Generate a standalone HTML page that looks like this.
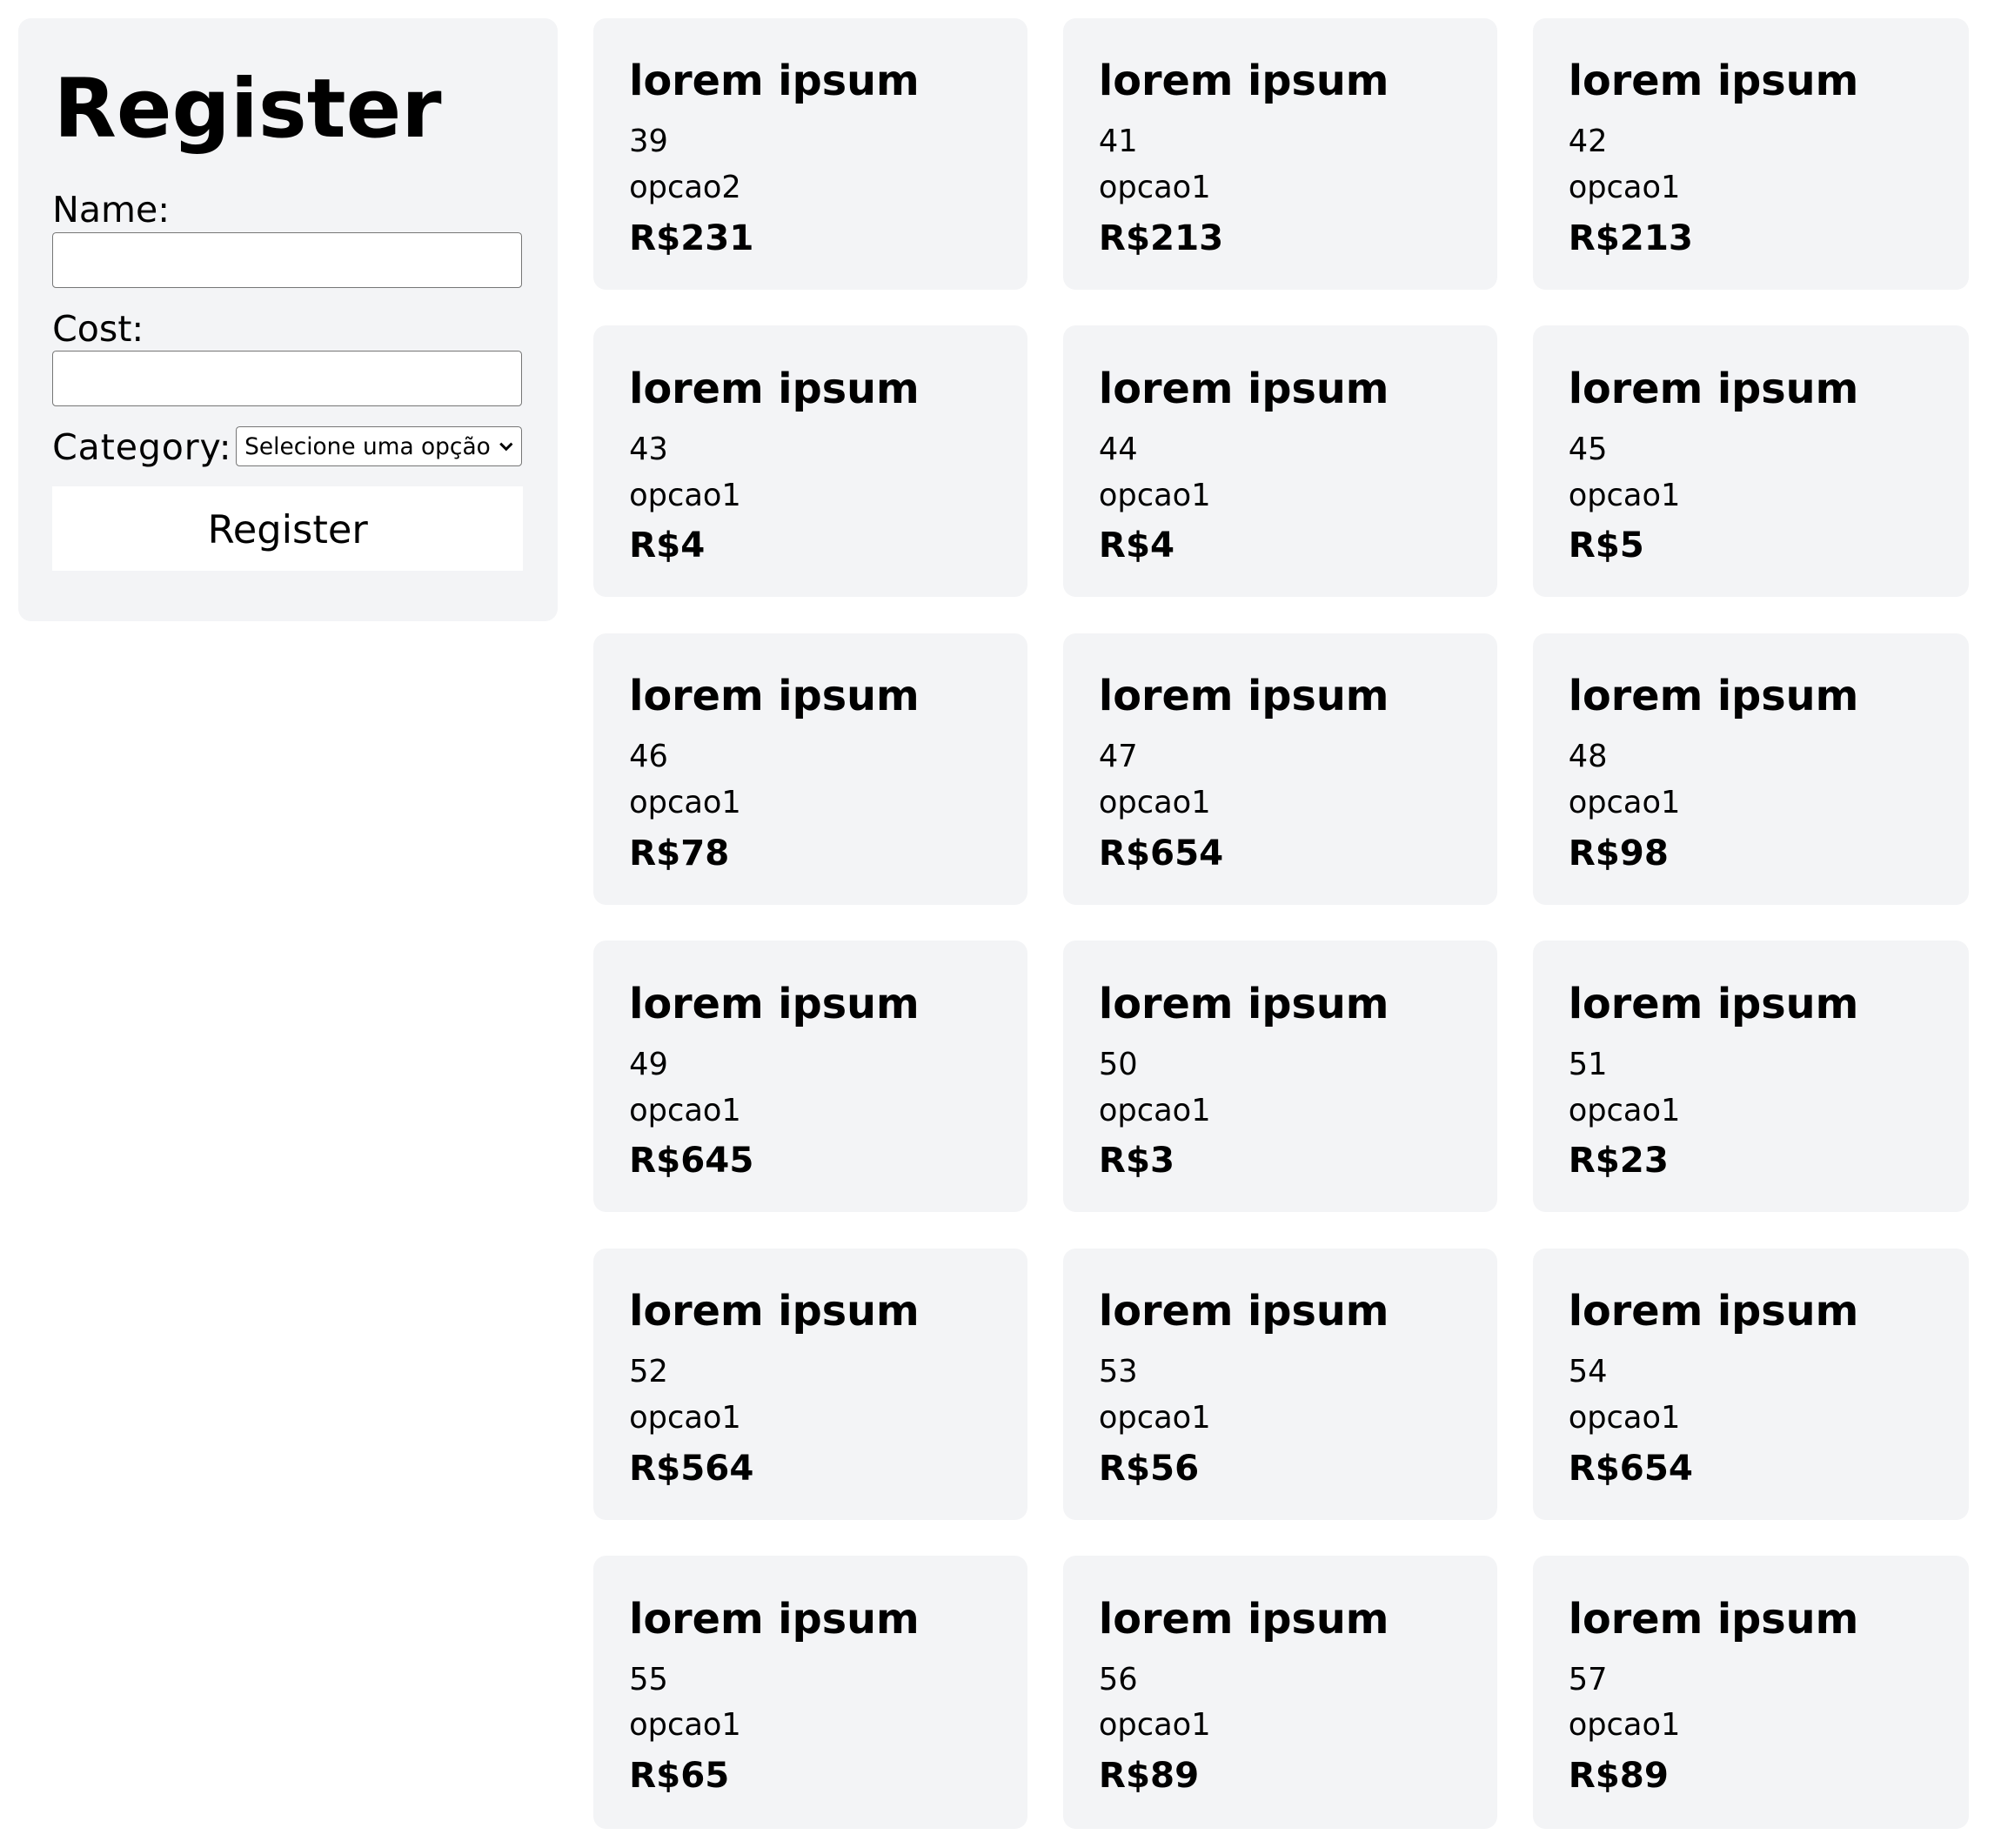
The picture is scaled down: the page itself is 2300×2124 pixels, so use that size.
<!DOCTYPE html>
<html><head><meta charset="utf-8"><style>
html,body{margin:0;padding:0;background:#fff;}
body{width:2300px;height:2124px;overflow:hidden;}
#w{zoom:1.4668;position:relative;width:1568px;height:1448px;font-family:"DejaVu Sans","Liberation Sans",sans-serif;color:#000;}
.p{position:absolute;left:14px;top:14px;width:423px;height:473px;background:#f3f4f6;border-radius:10px;}
.t{position:absolute;line-height:1;white-space:nowrap;}
.inp{position:absolute;left:41px;width:367px;background:#fff;border:1px solid #767676;border-radius:3px;}
.c{position:absolute;width:340px;height:213px;background:#f3f4f6;border-radius:10px;}
.c .h{position:absolute;left:28px;top:34px;font-size:32.5px;font-weight:bold;line-height:1;}
.c .n{position:absolute;left:28px;top:85px;font-size:24px;line-height:1;}
.c .o{position:absolute;left:28px;top:121px;font-size:24px;line-height:1;}
.c .r{position:absolute;left:28px;top:159px;font-size:27.5px;font-weight:bold;line-height:1;}
</style></head><body><div id="w">
<div class="p"></div>
<div class="t" style="left:42px;top:54px;font-size:64px;font-weight:bold;">Register</div>
<div class="t" style="left:41px;top:151px;font-size:28px;">Name:</div>
<div class="inp" style="top:182px;height:42px;"></div>
<div class="t" style="left:41px;top:244px;font-size:28px;">Cost:</div>
<div class="inp" style="top:275px;height:42px;"></div>
<div class="t" style="left:41px;top:337px;font-size:28px;letter-spacing:0.6px;">Category:</div>
<div style="position:absolute;left:185px;top:334px;width:223px;height:30px;background:#fff;border:1px solid #767676;border-radius:3px;">
<span class="t" style="left:6px;top:7px;font-size:18px;">Selecione uma opção</span>
<svg style="position:absolute;right:6px;top:10px" width="12" height="10" viewBox="0 0 12 10"><path d="M1.5 2.5 L6 7 L10.5 2.5" fill="none" stroke="#000" stroke-width="2"/></svg>
</div>
<div style="position:absolute;left:41px;top:381px;width:369px;height:66px;background:#fff;"></div>
<div class="t" style="left:41px;width:369px;text-align:center;top:400px;font-size:30.5px;">Register</div>

<div class="c" style="left:465px;top:14px"><div class="h">lorem ipsum</div><div class="n">39</div><div class="o">opcao2</div><div class="r">R$231</div></div>
<div class="c" style="left:833px;top:14px"><div class="h">lorem ipsum</div><div class="n">41</div><div class="o">opcao1</div><div class="r">R$213</div></div>
<div class="c" style="left:1201px;top:14px;width:342px"><div class="h">lorem ipsum</div><div class="n">42</div><div class="o">opcao1</div><div class="r">R$213</div></div>

<div class="c" style="left:465px;top:255px"><div class="h">lorem ipsum</div><div class="n">43</div><div class="o">opcao1</div><div class="r">R$4</div></div>
<div class="c" style="left:833px;top:255px"><div class="h">lorem ipsum</div><div class="n">44</div><div class="o">opcao1</div><div class="r">R$4</div></div>
<div class="c" style="left:1201px;top:255px;width:342px"><div class="h">lorem ipsum</div><div class="n">45</div><div class="o">opcao1</div><div class="r">R$5</div></div>

<div class="c" style="left:465px;top:496px"><div class="h">lorem ipsum</div><div class="n">46</div><div class="o">opcao1</div><div class="r">R$78</div></div>
<div class="c" style="left:833px;top:496px"><div class="h">lorem ipsum</div><div class="n">47</div><div class="o">opcao1</div><div class="r">R$654</div></div>
<div class="c" style="left:1201px;top:496px;width:342px"><div class="h">lorem ipsum</div><div class="n">48</div><div class="o">opcao1</div><div class="r">R$98</div></div>

<div class="c" style="left:465px;top:737px"><div class="h">lorem ipsum</div><div class="n">49</div><div class="o">opcao1</div><div class="r">R$645</div></div>
<div class="c" style="left:833px;top:737px"><div class="h">lorem ipsum</div><div class="n">50</div><div class="o">opcao1</div><div class="r">R$3</div></div>
<div class="c" style="left:1201px;top:737px;width:342px"><div class="h">lorem ipsum</div><div class="n">51</div><div class="o">opcao1</div><div class="r">R$23</div></div>

<div class="c" style="left:465px;top:978px"><div class="h">lorem ipsum</div><div class="n">52</div><div class="o">opcao1</div><div class="r">R$564</div></div>
<div class="c" style="left:833px;top:978px"><div class="h">lorem ipsum</div><div class="n">53</div><div class="o">opcao1</div><div class="r">R$56</div></div>
<div class="c" style="left:1201px;top:978px;width:342px"><div class="h">lorem ipsum</div><div class="n">54</div><div class="o">opcao1</div><div class="r">R$654</div></div>

<div class="c" style="left:465px;top:1219px;height:214px"><div class="h">lorem ipsum</div><div class="n">55</div><div class="o">opcao1</div><div class="r">R$65</div></div>
<div class="c" style="left:833px;top:1219px;height:214px"><div class="h">lorem ipsum</div><div class="n">56</div><div class="o">opcao1</div><div class="r">R$89</div></div>
<div class="c" style="left:1201px;top:1219px;width:342px;height:214px"><div class="h">lorem ipsum</div><div class="n">57</div><div class="o">opcao1</div><div class="r">R$89</div></div>
</div></body></html>
